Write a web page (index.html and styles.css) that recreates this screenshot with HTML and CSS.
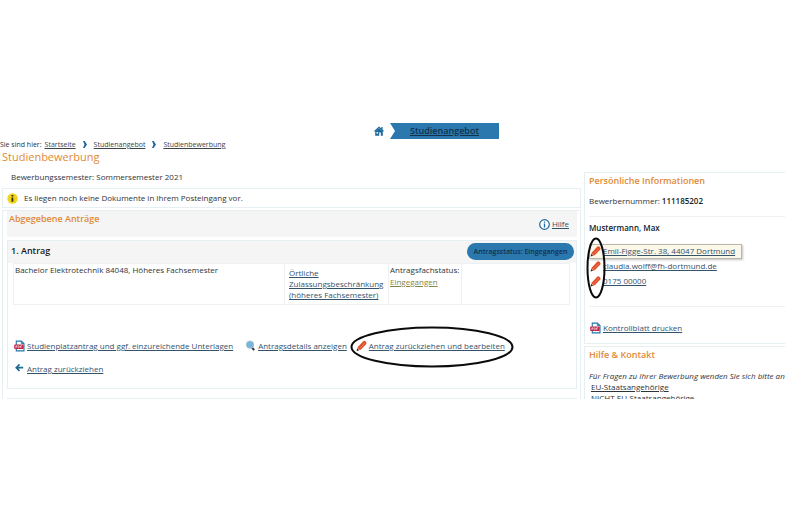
FILE: index.html
```
<!DOCTYPE html>
<html lang="de">
<head>
    <meta charset="UTF-8">
    <meta name="viewport" content="width=device-width, initial-scale=1.0">
    <title>Studienbewerbung</title>
    <link rel="stylesheet" href="styles.css">
</head>
<body>
    <!-- shared icons -->
    <svg class="sprite" aria-hidden="true">
        <symbol id="pencil" viewBox="0 0 12 12">
            <path d="M1 11 L2 7.2 L7.6 1 Q9 -.2 10.6 1 Q12 2.4 11.2 3.8 L5.2 10 Z" fill="#e2502b"/>
            <path d="M4 8.6 L9.6 2.8" stroke="#f3845f" stroke-width=".8"/>
            <path d="M1 11 L1.8 7.8 L4.5 10 Z" fill="#e9a08a"/>
            <path d="M.6 11.5 L1.4 8.8 L3.2 10.5 Z" fill="#30211f"/>
        </symbol>
        <symbol id="pdf" viewBox="0 0 12 12">
            <path d="M2.5 .7 H8 L10.9 3.3 V11.3 H2.5 Z" fill="#fff" stroke="#2477a8" stroke-width="1.2"/>
            <path d="M8 .7 V3.3 H10.6" fill="none" stroke="#2477a8"/>
            <rect x=".2" y="4.4" width="10.3" height="4.8" rx="1" fill="#c42343"/>
            <path d="M2 8.2 V5.7 H3.2 V7 H2 M4.5 5.7 V8 H5.3 L5.9 7.3 V6.3 L5.3 5.7 Z M7.2 8.2 V5.7 H8.8 M7.2 7 H8.5" fill="none" stroke="#fff" stroke-width=".6"/>
        </symbol>
        <symbol id="chevron" viewBox="0 0 4 7">
            <path d="M0 0 H1.6 L4 3.5 L1.6 7 H0 L1.5 3.5 Z" fill="#1f6597"/>
        </symbol>
    </svg>

    <nav class="topnav">
        <a href="#" class="topnav_home" aria-label="Startseite">
            <svg viewBox="0 0 10 10"><path d="M5 .4 L0 5 L.8 5.7 L5 2 L9.2 5.7 L10 5 L8.6 3.7 V1 H7.3 V2.5 Z M1.2 5.6 L5 2.2 L8.8 5.6 V9.7 H6.8 V6.6 H5.2 V9.7 H1.2 Z" fill="#1f6a9c"/><rect x="2.5" y="6.1" width="1.6" height="1.5" fill="#fff"/></svg>
        </a>
        <a href="#" class="topnav_item">Studienangebot</a>
    </nav>

    <nav class="crumbs">
        <span>Sie sind hier:</span>
        <a href="#">Startseite</a>
        <svg><use href="#chevron"/></svg>
        <a href="#">Studienangebot</a>
        <svg><use href="#chevron"/></svg>
        <a href="#">Studienbewerbung</a>
    </nav>

    <div class="layout">
        <main class="content">
            <h1>Studienbewerbung</h1>
            <p class="semester">Bewerbungssemester: Sommersemester 2021</p>

            <div class="message">
                <svg viewBox="0 0 11 11"><circle cx="5.5" cy="5.5" r="5.2" fill="#f0d51c"/><path d="M4.5 4.5 H6.3 V8.7 H4.5 Z M4.5 2 H6.3 V3.6 H4.5 Z" fill="#332c13"/></svg>
                <span>Es liegen noch keine Dokumente in Ihrem Posteingang vor.</span>
            </div>

            <section class="applications">
                <div class="applications_head">
                    <h2>Abgegebene Anträge</h2>
                    <a href="#" class="help">
                        <svg viewBox="0 0 11 11"><circle cx="5.5" cy="5.5" r="4.8" fill="#fff" stroke="#1f6a9c" stroke-width="1.2"/><path d="M5.5 4.6 V8.5 M5.5 2.5 V3.7" stroke="#1f6a9c" stroke-width="1.3"/></svg>
                        <span>Hilfe</span>
                    </a>
                </div>

                <article class="application">
                    <header class="application_head">
                        <h3>1. Antrag</h3>
                        <button type="button" class="status">Antragsstatus: Eingegangen</button>
                    </header>

                    <table class="subjects">
                        <tr>
                            <td class="col_subject">Bachelor Elektrotechnik 84048, Höheres Fachsemester</td>
                            <td class="col_limit"><a href="#">Örtliche<br>Zulassungsbeschränkung<br>(höheres Fachsemester)</a></td>
                            <td class="col_state">Antragsfachstatus:<br><a href="#" class="state">Eingegangen</a></td>
                            <td></td>
                        </tr>
                    </table>

                    <div class="actions">
                        <a href="#" class="action"><svg><use href="#pdf"/></svg><span>Studienplatzantrag und ggf. einzureichende Unterlagen</span></a>
                        <a href="#" class="action action_details"><svg viewBox="0 0 12 12"><path d="M7 7 L10 10.5" stroke="#25303a" stroke-width="2"/><circle cx="5.5" cy="4.5" r="4" fill="#76b5de" stroke="#a9bccb"/></svg><span>Antragsdetails anzeigen</span></a>
                        <a href="#" class="action action_edit"><svg><use href="#pencil"/></svg><span>Antrag zurückziehen und bearbeiten</span>
                            <svg class="ring ring_wide" viewBox="0 0 164 42"><ellipse cx="82" cy="21" rx="80.5" ry="19.5"/></svg>
                        </a>
                    </div>
                    <div class="actions">
                        <a href="#" class="action"><svg viewBox="0 0 12 12"><path d="M6 1 L2.5 4.5 L6 8 M3 4.5 H10" fill="none" stroke="#1f6a8f" stroke-width="1.8"/></svg><span>Antrag zurückziehen</span></a>
                    </div>
                </article>
                <div class="next_application"></div>
            </section>
        </main>

        <aside class="sidebar">
            <section class="box">
                <h2>Persönliche Informationen</h2>
                <p class="number">Bewerbernummer: <strong>111185202</strong></p>
                <div class="person">
                    <h3>Mustermann, Max</h3>
                    <ul class="contact">
                        <li class="active"><a href="#"><svg><use href="#pencil"/></svg><span>Emil-Figge-Str. 38, 44047 Dortmund</span></a></li>
                        <li><a href="#"><svg><use href="#pencil"/></svg><span>claudia.wolff@fh-dortmund.de</span></a></li>
                        <li><a href="#"><svg><use href="#pencil"/></svg><span>0175 00000</span></a></li>
                    </ul>
                    <svg class="ring ring_tall" viewBox="0 0 20 62"><ellipse cx="10" cy="31" rx="8.5" ry="29.5"/></svg>
                </div>
                <a href="#" class="action print"><svg><use href="#pdf"/></svg><span>Kontrollblatt drucken</span></a>
            </section>

            <section class="box box_help">
                <h2>Hilfe &amp; Kontakt</h2>
                <p class="hint">Für Fragen zu Ihrer Bewerbung wenden Sie sich bitte an</p>
                <div class="help_links">
                    <a href="#">EU-Staatsangehörige</a>
                    <a href="#">NICHT EU-Staatsangehörige</a>
                </div>
            </section>
        </aside>
    </div>
</body>
</html>
```
FILE: styles.css
```
* {
    margin: 0;
    padding: 0;
    box-sizing: border-box;
}

body {
    font-family: 'Open Sans', 'Noto Sans', sans-serif;
    font-size: 8px;
    line-height: 12px;
    color: #303336;
    background: #fff;
    padding-top: 123px;
    overflow-x: hidden;
}

a {
    color: #35526b;
    text-decoration: underline;
    text-underline-offset: 1px;
}

.sprite {
    display: none;
}

h1, h2 {
    color: #e18a35;
    font-weight: 600;
}

h1 {
    font-size: 11px;
    line-height: 14px;
    font-weight: 400;
}

h2 {
    font-size: 9px;
}

/* top navigation */
.topnav {
    display: flex;
    justify-content: center;
    align-items: center;
    gap: 6px;
    padding-left: 88px;
}

.topnav_home svg {
    display: block;
    width: 10px;
    height: 10px;
}

.topnav_item {
    width: 109px;
    line-height: 16px;
    font-size: 9px;
    font-weight: 600;
    text-align: center;
    color: #12304a;
    background: #2b78ae;
    clip-path: polygon(0 0, 100% 0, 100% 100%, 0 100%, 5px 50%);
}

.crumbs {
    display: flex;
    align-items: center;
    gap: 7px;
    font-size: 7px;
    line-height: 11px;
}

.crumbs span {
    margin-right: -4px;
}

.crumbs a {
    color: #3c444b;
}

.crumbs svg {
    width: 4px;
    height: 7px;
}

/* columns */
.layout {
    display: flex;
    gap: 3px;
}

.content {
    flex: 1;
    padding-left: 2px;
}

.semester {
    padding: 7px 9px 5px;
}

.message {
    display: flex;
    align-items: center;
    gap: 6px;
    height: 20px;
    padding-left: 4px;
    border: 1px solid #e6eff2;
}

.message svg,
.help svg {
    width: 11px;
    height: 11px;
}

.applications {
    margin-top: 2px;
    padding: 0 3px 0 4px;
    border: 1px solid #e6eff2;
    border-bottom: 0;
}

.applications_head {
    display: flex;
    justify-content: space-between;
    padding: 2px 8px 0 2px;
    height: 26px;
    background: #f5f5f5;
}

.help {
    display: flex;
    align-items: center;
    gap: 2px;
    height: 22px;
}

.application {
    margin-top: 3px;
    padding-bottom: 13px;
    border: 1px solid #e6eff2;
}

.application_head {
    display: flex;
    justify-content: space-between;
    align-items: center;
    padding: 0 2px 2px 3px;
    height: 22px;
    background: #f5f5f5;
}

.application_head h3 {
    font-size: 9px;
    font-weight: 600;
    color: #17191b;
}

.status {
    width: 107px;
    height: 17px;
    border: 0;
    border-radius: 9px;
    font: 600 7px 'Open Sans', 'Noto Sans', sans-serif;
    color: #12304a;
    background: #2b78ae;
}

.subjects {
    width: calc(100% - 11px);
    height: 42px;
    margin-left: 5px;
    table-layout: fixed;
    border-collapse: collapse;
}

.subjects td {
    padding: 0 1px;
    vertical-align: top;
    border: 1px solid #edf1f3;
}

.subjects .col_subject {
    width: 271px;
}

.subjects .col_limit {
    width: 104px;
    padding: 3px 4px;
    line-height: 11px;
    white-space: nowrap;
}

.subjects .col_state {
    width: 73px;
    white-space: nowrap;
}

.state {
    color: #858545;
}

.actions {
    display: flex;
    gap: 12px;
    padding-left: 6px;
    margin-top: 11px;
}

.subjects + .actions {
    margin-top: 35px;
}

.action {
    display: flex;
    align-items: center;
    gap: 2px;
    white-space: nowrap;
}

.action svg {
    flex: none;
    width: 11px;
    height: 12px;
}

.action_edit {
    position: relative;
    margin-left: -3px;
}

.next_application {
    margin-top: 9px;
    border-top: 1px solid #e6eff2;
}

/* hand drawn marks */
svg.ring {
    position: absolute;
    fill: none;
    stroke: #0b0b0b;
    stroke-width: 2px;
}

svg.ring_wide {
    left: -6px;
    top: -14px;
    width: 164px;
    height: 42px;
}

svg.ring_tall {
    left: -3px;
    top: 20px;
    width: 20px;
    height: 62px;
}

/* right column */
.sidebar {
    width: 201px;
    padding-top: 22px;
}

.box {
    padding: 2px 0 9px 4px;
    border: 1px solid #e6eff2;
    border-right: 0;
}

.number {
    padding: 8px 0 9px;
    border-bottom: 1px solid #edf1f3;
}

.number strong,
.person h3 {
    font-size: 8px;
    font-weight: 600;
    color: #17191b;
}

.person {
    position: relative;
    padding: 5px 0 17px;
    border-bottom: 1px solid #edf1f3;
}

.contact {
    margin-top: 10px;
    list-style: none;
}

.contact li {
    width: fit-content;
    height: 15px;
    padding-right: 6px;
    border: 1px solid transparent;
}

.contact .active {
    border-color: #b9b8a8;
    background: #fbf8ea;
    box-shadow: 1px 1px 2px #c4c4c4;
}

.contact a {
    display: flex;
    align-items: center;
    gap: 2px;
}

.contact a svg {
    width: 11px;
    height: 11px;
}

.print {
    padding: 15px 0 0 1px;
}

.box_help {
    margin-top: 2px;
    padding-bottom: 0;
    border-bottom: 0;
}

.hint {
    margin-top: 9px;
    line-height: 11px;
    font-style: italic;
    white-space: nowrap;
}

/* the list shows only the start of its second row */
.help_links {
    display: flex;
    flex-direction: column;
    height: 18px;
    padding-left: 2px;
    line-height: 11px;
    overflow: hidden;
}

.help_links a {
    color: #303336;
}
```
